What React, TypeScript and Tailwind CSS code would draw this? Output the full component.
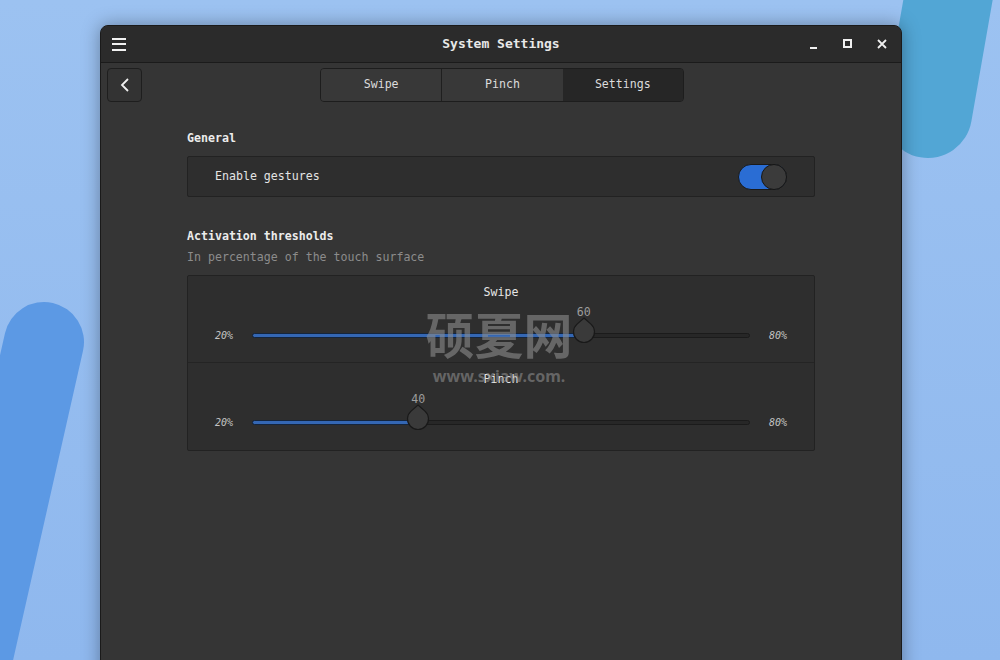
import React from "react";

const MONO = { fontFamily: '"DejaVu Sans Mono", "Liberation Mono", monospace' };

function Knob() {
  return (
    <svg width="24" height="28" viewBox="0 0 24 28" className="block">
      <path
        d="M12 2 L18.94 8.13 A10.5 10.5 0 1 1 5.06 8.13 Z"
        fill="#3a3a3a"
        stroke="#191919"
        strokeWidth="1.2"
      />
    </svg>
  );
}

function SliderRow({ title, value, last }: { title: string; value: number; last?: boolean }) {
  const pct = ((value - 20) / 60) * 100;
  return (
    <div className={`h-[87px] ${last ? "" : "border-b border-[#242424]"}`}>
      <div className="pt-[8px] text-center text-[11.6px] leading-[16px] text-[#e6e6e6]">{title}</div>
      <div className="mt-[23px] flex h-[24px] items-center gap-[19px] px-[27px]">
        <span className="w-[18px] text-[10px] italic text-[#c4c4c4]">20%</span>
        <div className="relative h-[5px] flex-1 rounded-full border border-[#1b1b1b] bg-[#272727]">
          <div
            className="absolute -left-px -top-px h-[5px] rounded-full border border-[#14253d] bg-[#3467b4]"
            style={{ width: `calc(${pct}% + 2px)` }}
          />
          <div
            className="absolute top-[-18px] -translate-x-1/2"
            style={{ left: `${pct}%` }}
          >
            <Knob />
          </div>
          <div
            className="absolute top-[-30px] -translate-x-1/2 text-[11.6px] leading-[16px] text-[#9c9c9c]"
            style={{ left: `${pct}%` }}
          >
            {value}
          </div>
        </div>
        <span className="w-[18px] text-[10px] italic text-[#c4c4c4]">80%</span>
      </div>
    </div>
  );
}

export default function App() {
  return (
    <div className="relative h-[660px] w-[1000px] overflow-hidden bg-[#8db8ef]" style={MONO}>
      {/* wallpaper */}
      <svg className="absolute inset-0" width="1000" height="660" viewBox="0 0 1000 660">
        <defs>
          <linearGradient id="lg" x1="0" y1="0" x2="0" y2="1">
            <stop offset="0" stopColor="#9cc2f1" />
            <stop offset="1" stopColor="#8fb8ee" />
          </linearGradient>
        </defs>
        <rect width="1000" height="660" fill="url(#lg)" />
        <line x1="44" y1="342" x2="-46" y2="740" stroke="#5c99e4" strokeWidth="80" strokeLinecap="round" />
        <line x1="962" y1="-80" x2="928" y2="114" stroke="#52a6d5" strokeWidth="88" strokeLinecap="round" />
      </svg>

      {/* window */}
      <div className="absolute left-[100px] top-[25px] flex h-[660px] w-[802px] flex-col overflow-hidden rounded-t-[8px] border border-[#1a1a1a] bg-[#353535] shadow-[0_0_18px_rgba(0,0,0,0.35)]">
        {/* title bar */}
        <div className="relative flex h-[37px] shrink-0 items-center border-b border-[#1b1b1b] bg-[#2b2b2b]">
          <div className="ml-[11px] flex w-[14px] flex-col gap-[3.5px]">
            <span className="h-[2px] bg-[#f2f2f2]" />
            <span className="h-[2px] bg-[#f2f2f2]" />
            <span className="h-[2px] bg-[#f2f2f2]" />
          </div>
          <div className="absolute inset-x-0 top-0 flex h-full items-center justify-center text-[13px] font-bold text-[#e8e8e8]">
            System Settings
          </div>
          <div className="ml-auto mr-[14px] flex items-center gap-[24px]">
            <svg width="10" height="10" viewBox="0 0 10 10">
              <rect x="1" y="8" width="7" height="2" fill="#f0f0f0" />
            </svg>
            <svg width="10" height="10" viewBox="0 0 10 10">
              <rect x="1" y="1" width="7" height="7" fill="none" stroke="#f0f0f0" strokeWidth="2" />
            </svg>
            <svg width="10" height="10" viewBox="0 0 10 10">
              <path d="M1 1 L9 9 M9 1 L1 9" stroke="#f0f0f0" strokeWidth="1.8" />
            </svg>
          </div>
        </div>

        {/* toolbar */}
        <div className="relative flex h-[43px] shrink-0 items-center">
          <button className="ml-[6px] flex h-[34px] w-[35px] items-center justify-center rounded-[4px] border border-[#1e1e1e] bg-[#333333]">
            <svg width="10" height="14" viewBox="0 0 10 14">
              <path d="M8 1 L2 7 L8 13" fill="none" stroke="#f0f0f0" strokeWidth="1.8" />
            </svg>
          </button>
          <div className="absolute left-[219px] top-[5px] flex h-[34px] w-[364px] overflow-hidden rounded-[4px] border border-[#1d1d1d] text-[11.6px] text-[#dcdcdc]">
            <div className="flex flex-1 items-center justify-center border-r border-[#1f1f1f] bg-[#383838]">Swipe</div>
            <div className="flex flex-1 items-center justify-center bg-[#383838]">Pinch</div>
            <div className="flex flex-1 items-center justify-center bg-[#262626]">Settings</div>
          </div>
        </div>

        {/* content */}
        <div className="mx-auto w-[628px] pt-[24px]">
          <div className="text-[11.6px] font-bold leading-[16px] text-[#ececec]">General</div>
          <div className="mt-[10px] flex h-[41px] items-center justify-between rounded-[2px] border border-[#222222] bg-[#2e2e2e] pl-[27px] pr-[27px]">
            <span className="text-[11.6px] text-[#e4e4e4]">Enable gestures</span>
            <div className="relative h-[26px] w-[49px] rounded-full border border-[#1a1a1a] bg-[#2a6dd4]">
              <div className="absolute right-[-1px] top-[-1px] h-[26px] w-[26px] rounded-full border border-[#171717] bg-[#3b3b3b]" />
            </div>
          </div>

          <div className="mt-[31px] text-[11.6px] font-bold leading-[16px] text-[#ececec]">Activation thresholds</div>
          <div className="mt-[5px] text-[11.6px] leading-[16px] text-[#8c8c8c]">In percentage of the touch surface</div>

          <div className="mt-[10px] rounded-[2px] border border-[#222222] bg-[#2e2e2e]">
            <SliderRow title="Swipe" value={60} />
            <SliderRow title="Pinch" value={40} last />
          </div>
        </div>
      </div>

      {/* watermark */}
      <div className="pointer-events-none absolute left-[424px] top-[302px] flex w-[150px] flex-col items-center text-[rgba(140,140,140,0.6)]">
        <div
          className="text-[49px] font-bold leading-[62px]"
          style={{ fontFamily: '"Noto Sans CJK SC", sans-serif' }}
        >
          硕夏网
        </div>
        <div
          className="mt-[2px] text-[16px] font-bold leading-[20px]"
          style={{ fontFamily: '"Noto Sans", sans-serif' }}
        >
          www.sxiaw.com.
        </div>
      </div>
    </div>
  );
}
